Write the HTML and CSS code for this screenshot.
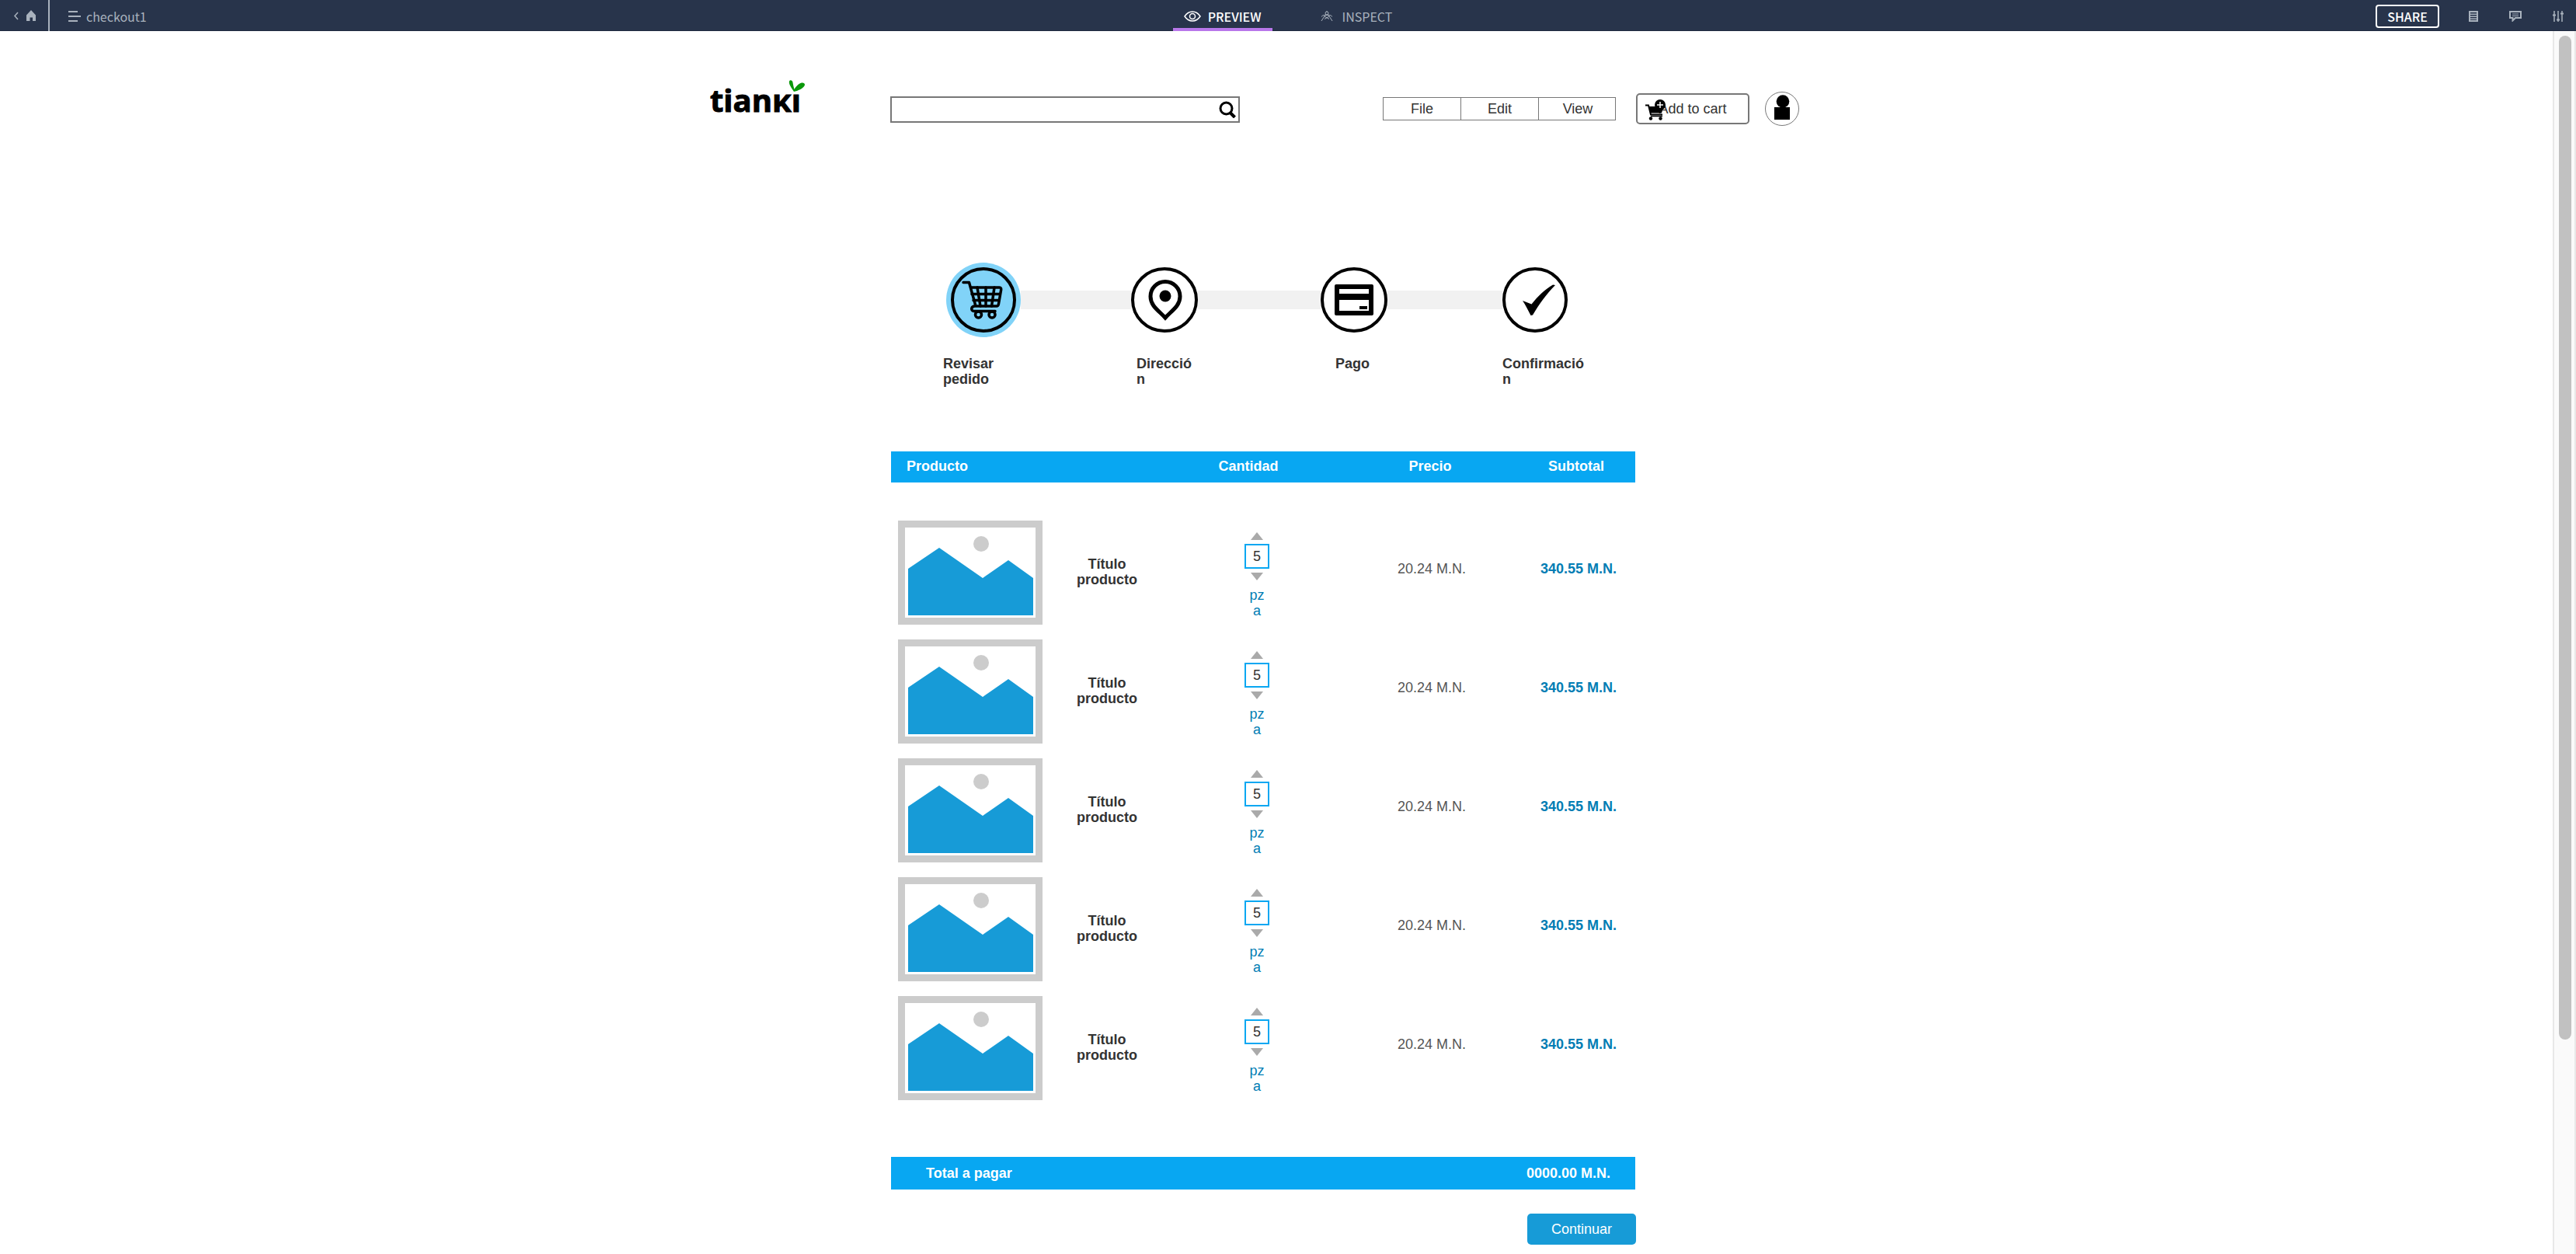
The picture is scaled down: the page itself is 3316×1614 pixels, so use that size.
FILE: index.html
```html
<!DOCTYPE html>
<html lang="es">
<head>
<meta charset="utf-8">
<meta name="viewport" content="width=device-width, initial-scale=1">
<title>checkout1</title>
<link rel="stylesheet" href="styles.css">
</head>
<body>
<svg class="defs" aria-hidden="true">
  <symbol id="picture" viewBox="0 0 186 134">
    <path fill="#ccc" fill-rule="evenodd" d="M0 0h186v134H0zM9 9v116h168V9z"/>
    <circle cx="107" cy="30" r="10" fill="#ccc"/>
    <path fill="#179bd7" d="M13 62L53 35l56 39 33-23 32 23v48H13z"/>
  </symbol>
  <symbol id="up" viewBox="0 0 16 10"><path fill="#aaa" d="M8 0l8 10H0z"/></symbol>
  <symbol id="down" viewBox="0 0 16 10"><path fill="#aaa" d="M8 10L0 0h16z"/></symbol>
</svg>

<header class="topbar">
  <div class="topbar-left">
    <a class="home" href="#" aria-label="Inicio">
      <svg width="30" height="16" viewBox="0 0 30 16"><path d="M6 4L2 8.500l4 4.500" fill="none" stroke="currentColor" stroke-width="1.500"/><path d="M23 1l6 6.500V15h-4v-4.500h-3.500V15h-4.500V7.500z" fill="currentColor"/></svg>
    </a>
    <a class="page-name" href="#">
      <svg width="16" height="14" viewBox="0 0 16 14"><path d="M0 1h12M0 7h16M0 13h12" stroke="currentColor" stroke-width="2"/></svg>
      <span>checkout1</span>
    </a>
  </div>
  <nav class="tabs">
    <a class="tab active" href="#">
      <svg width="22" height="14" viewBox="0 0 22 14" fill="none" stroke="currentColor" stroke-width="1.500"><path d="M1 7c2.500-3.800 6-6 10-6s7.500 2.200 10 6c-2.500 3.800-6 6-10 6S3.500 10.800 1 7z"/><circle cx="11" cy="7" r="3.500"/></svg>
      <span>PREVIEW</span>
    </a>
    <a class="tab" href="#">
      <svg width="16" height="14" viewBox="0 0 16 14" fill="none" stroke="currentColor"><circle cx="8" cy="3" r="2"/><path d="M8 0v1M6.500 4.500L1 13M9.500 4.500L15 13M5 7l6 3.500M11 7l-6 3.500M1 7.500C3 5 5 5.500 8 5.500s5-.5 7 2"/></svg>
      <span>INSPECT</span>
    </a>
  </nav>
  <div class="topbar-right">
    <button class="share" type="button">SHARE</button>
    <button class="tool" type="button" aria-label="Notas"><svg width="12" height="14" viewBox="0 0 12 14"><path fill="currentColor" fill-rule="evenodd" d="M0 0h12v14H0zM2 2v1.500h8V2zM2 5v1.500h8V5zM2 8v1.500h8V8zM2 11v1h8v-1z"/></svg></button>
    <button class="tool" type="button" aria-label="Comentarios"><svg width="16" height="14" viewBox="0 0 16 14"><path d="M1 1h14v8H8l-3.500 3.500V9H1z" fill="none" stroke="currentColor" stroke-width="2"/><path d="M4 4h8M4 6.500h8" stroke="currentColor"/></svg></button>
    <button class="tool" type="button" aria-label="Ajustes"><svg width="14" height="14" viewBox="0 0 14 14" stroke="currentColor"><path d="M2 0v14M7 0v14M12 0v14" stroke-width="1.500"/><path d="M0 5.500h4M5 11.500h4M10 3.500h4" stroke-width="2"/></svg></button>
  </div>
</header>

<div class="workspace">
  <main class="stage">
    <div class="canvas">
      <div class="site-header">
        <a class="logo" href="#">tianĸı
          <svg class="leaf" width="22" height="16" viewBox="0 0 22 16" aria-hidden="true"><path fill="#0a980a" d="M7 15C4 11 0 5 1 1.500 2-.5 5 0 5.500 3 6 6 6.500 9 7.500 12 9 9 13 4.500 17 3.500c3-.5 5 1.500 3.500 4C18.500 11 12 14 7 15z"/></svg>
        </a>
        <form class="search">
          <input type="search" aria-label="Buscar">
          <button type="button" aria-label="Buscar"><svg width="22" height="22" viewBox="0 0 22 22" fill="none" stroke="#000"><circle cx="9.500" cy="9.500" r="7.500" stroke-width="3"/><path d="M14.500 15l6 6" stroke-width="4"/></svg></button>
        </form>
        <div class="actions">
          <nav class="menu"><a href="#">File</a><a href="#">Edit</a><a href="#">View</a></nav>
          <button class="cart" type="button">Add to cart
            <svg class="cart-icon" width="27" height="27" viewBox="0 0 27 27" aria-hidden="true"><path d="M0 7.500h4l3 12h15" fill="none" stroke="#000" stroke-width="2"/><path d="M4 9h14l4 5-1 3.500H7z"/><path d="M7 21.500h15" stroke="#000" stroke-width="1.500"/><circle cx="7" cy="24.500" r="2.200"/><circle cx="19.500" cy="24.500" r="2.200"/><circle cx="19" cy="7" r="7"/><path d="M19 3v8M15 7h8" stroke="#fff" stroke-width="1.500"/></svg>
          </button>
          <a class="avatar" href="#" aria-label="Cuenta"><svg width="44" height="44" viewBox="0 0 44 44"><circle cx="22" cy="22" r="21.500" fill="#fff" stroke="#777"/><circle cx="23" cy="12.500" r="8.300"/><path d="M12 20h20v16H12z"/></svg></a>
        </div>
      </div>

      <div class="checkout">
        <ol class="steps">
          <li class="step review">
            <div class="track"><svg width="96" height="96" viewBox="0 0 96 96"><circle cx="48" cy="48" r="48" fill="#81d3f8"/><circle cx="48" cy="48" r="40" fill="none" stroke="#000" stroke-width="4"/><g fill="none" stroke="#000" stroke-width="3.500" stroke-linejoin="round" stroke-linecap="round"><path d="M22 25.500h7.500L38 56h27c2 0 2-1 2.500-3l3-17c.5-2.500 0-4-2-4H31.500M37 56c-5 0-6 6-1 6.500h27"/><path d="M33 40.500h36M35 48.500h33M40 32l4 24M51 32v24M62 32l-3.500 24"/><circle cx="41.500" cy="67" r="4"/><circle cx="59" cy="67" r="4"/></g></svg></div>
            <span class="label">Revisar pedido</span>
          </li>
          <li class="step address">
            <div class="track"><svg width="86" height="84" viewBox="0 0 86 84"><ellipse cx="43" cy="42" rx="41" ry="40" fill="#fff" stroke="#000" stroke-width="4"/><path d="M44 65C36 56 25 50 25 37.500a19 19 0 0 1 38 0C63 50 52 56 44 65z" fill="none" stroke="#000" stroke-width="5"/><circle cx="44" cy="37" r="7.500"/></svg></div>
            <span class="label">Dirección</span>
          </li>
          <li class="step payment">
            <div class="track"><svg width="86" height="84" viewBox="0 0 86 84"><ellipse cx="43" cy="42" rx="41" ry="40" fill="#fff" stroke="#000" stroke-width="4"/><path fill-rule="evenodd" d="M20 22h46q2 0 2 2v36q0 2-2 2H20q-2 0-2-2V24q0-2 2-2zM24 28v6h38v-6zM24 42v14h38V42z"/><path d="M50 50h10v4H50z"/></svg></div>
            <span class="label">Pago</span>
          </li>
          <li class="step confirm">
            <div class="track"><svg width="84" height="84" viewBox="0 0 84 84"><circle cx="42" cy="42" r="40" fill="#fff" stroke="#000" stroke-width="4"/><path d="M26 43l11.500 4.500C46 37 54 29 65 22.500l3 .5C57 34 47 48 39 61.500l-2.500.5C33 55 30 49 26 43z"/></svg></div>
            <span class="label">Confirmación</span>
          </li>
        </ol>

        <table class="items">
          <colgroup><col class="c-image"><col class="c-title"><col class="c-qty"><col class="c-price"><col></colgroup>
          <thead><tr><th class="h-product" colspan="2">Producto</th><th class="h-qty">Cantidad</th><th class="h-price">Precio</th><th>Subtotal</th></tr></thead>
          <tbody>
            <tr>
              <td class="image"><svg width="186" height="134"><use href="#picture"/></svg></td>
              <td class="title">Título<br>producto</td>
              <td class="qty"><div class="spinner"><button type="button" aria-label="Más"><svg width="16" height="10"><use href="#up"/></svg></button><input type="text" value="5" aria-label="Cantidad"><button type="button" aria-label="Menos"><svg width="16" height="10"><use href="#down"/></svg></button><span class="unit">pza</span></div></td>
              <td class="price">20.24 M.N.</td><td class="subtotal">340.55 M.N.</td>
            </tr>
            <tr>
              <td class="image"><svg width="186" height="134"><use href="#picture"/></svg></td>
              <td class="title">Título<br>producto</td>
              <td class="qty"><div class="spinner"><button type="button" aria-label="Más"><svg width="16" height="10"><use href="#up"/></svg></button><input type="text" value="5" aria-label="Cantidad"><button type="button" aria-label="Menos"><svg width="16" height="10"><use href="#down"/></svg></button><span class="unit">pza</span></div></td>
              <td class="price">20.24 M.N.</td><td class="subtotal">340.55 M.N.</td>
            </tr>
            <tr>
              <td class="image"><svg width="186" height="134"><use href="#picture"/></svg></td>
              <td class="title">Título<br>producto</td>
              <td class="qty"><div class="spinner"><button type="button" aria-label="Más"><svg width="16" height="10"><use href="#up"/></svg></button><input type="text" value="5" aria-label="Cantidad"><button type="button" aria-label="Menos"><svg width="16" height="10"><use href="#down"/></svg></button><span class="unit">pza</span></div></td>
              <td class="price">20.24 M.N.</td><td class="subtotal">340.55 M.N.</td>
            </tr>
            <tr>
              <td class="image"><svg width="186" height="134"><use href="#picture"/></svg></td>
              <td class="title">Título<br>producto</td>
              <td class="qty"><div class="spinner"><button type="button" aria-label="Más"><svg width="16" height="10"><use href="#up"/></svg></button><input type="text" value="5" aria-label="Cantidad"><button type="button" aria-label="Menos"><svg width="16" height="10"><use href="#down"/></svg></button><span class="unit">pza</span></div></td>
              <td class="price">20.24 M.N.</td><td class="subtotal">340.55 M.N.</td>
            </tr>
            <tr>
              <td class="image"><svg width="186" height="134"><use href="#picture"/></svg></td>
              <td class="title">Título<br>producto</td>
              <td class="qty"><div class="spinner"><button type="button" aria-label="Más"><svg width="16" height="10"><use href="#up"/></svg></button><input type="text" value="5" aria-label="Cantidad"><button type="button" aria-label="Menos"><svg width="16" height="10"><use href="#down"/></svg></button><span class="unit">pza</span></div></td>
              <td class="price">20.24 M.N.</td><td class="subtotal">340.55 M.N.</td>
            </tr>
          </tbody>
        </table>

        <div class="total"><span>Total a pagar</span><span>0000.00 M.N.</span></div>
        <button class="continue" type="button">Continuar</button>
      </div>
    </div>
  </main>
  <div class="scrollbar" aria-hidden="true"><div class="thumb"></div></div>
</div>
</body>
</html>
```
FILE: styles.css
```css
* { box-sizing: border-box; }

body {
  margin: 0;
  min-height: 100vh;
  display: flex;
  flex-direction: column;
  background: #fff;
  color: #333;
  font: 18px/20px "Liberation Sans", Arial, sans-serif;
}

a { color: inherit; text-decoration: none; }
button, input { font: inherit; color: inherit; margin: 0; padding: 0; }
button { border: 0; background: none; }
svg { display: block; }
.defs { position: absolute; width: 0; height: 0; }

/* Top bar */
.topbar {
  display: grid;
  grid-template-columns: 1fr auto 1fr;
  height: 40px;
  background: #28344b;
  border-bottom: 1px solid #202a40;
  color: #a9b2bd;
  font: 16px/24px "Noto Sans CJK SC", "Noto Sans", sans-serif;
}
.topbar-left, .topbar-right, .home, .page-name, .tabs, .tab { display: flex; align-items: center; }
.topbar-left, .topbar-right { padding-top: 2px; }
.home {
  height: 40px;
  padding-left: 17px;
  width: 64px;
  margin-top: -2px;
  border-right: 2px solid #a9b2bd;
}
.page-name { padding-left: 24px; gap: 7px; }
.tabs { gap: 48px; }
.tab {
  height: 40px;
  padding: 6px 14px 0;
  gap: 9px;
  border-bottom: 4px solid transparent;
}
.tab:last-child { gap: 12px; }
.tab.active { color: #fff; font-weight: 500; border-color: #b877ea; }
.topbar-right { justify-content: flex-end; padding-right: 16px; }
.share {
  width: 82px;
  height: 30px;
  margin-right: 38px;
  border: 2px solid #fff;
  border-radius: 4px;
  color: #fff;
  font-weight: 500;
}
.tool + .tool { margin-left: 40px; }

/* Workspace */
.workspace { flex: 1; display: flex; }
.stage { flex: 1; padding: 63px 0 12px; }
.canvas { max-width: 1458px; margin: 0 auto; }
.scrollbar {
  width: 30px;
  padding: 6px 4px 0 6px;
  background: #fafafa;
  border-left: 2px solid #e8e8e8;
  border-right: 2px solid #e8e8e8;
}
.thumb { width: 16px; height: 82.4%; background: #c1c1c1; border-radius: 8px; }

/* Site header */
.site-header {
  display: flex;
  align-items: flex-end;
  max-width: 1402px;
  height: 59px;
}
.logo {
  position: relative;
  align-self: flex-start;
  width: 232px;
  padding-top: 4px;
  color: #000;
  font: 700 40px/44px "Open Sans", sans-serif;
  -webkit-text-stroke: 1px #000;
}
.leaf { position: absolute; left: 101px; top: 0; }
.search {
  display: flex;
  align-items: center;
  width: 450px;
  height: 34px;
  margin-bottom: 4px;
  padding-right: 3px;
  border: 2px solid #777;
}
.search input { flex: 1; min-width: 0; border: 0; outline: 0; background: none; }
.actions { display: flex; align-items: center; margin-left: auto; }
.menu {
  display: grid;
  grid-template-columns: 100px 100px 100px;
  height: 30px;
  border: 1px solid #777;
  width: 300px;
  text-align: center;
  line-height: 28px;
}
.menu a { border-right: 1px solid #777; }
.menu a:last-child { border: 0; }
.cart {
  position: relative;
  width: 146px;
  height: 40px;
  margin: 0 20px 0 26px;
  border: 2px solid #777;
  border-radius: 5px;
}
.cart-icon { position: absolute; left: 10px; top: 6px; }

/* Checkout */
.checkout { width: 960px; max-width: 100%; margin-left: 233px; padding-top: 176px; }
.steps { display: flex; margin: 0 0 83px 67px; padding: 0; list-style: none; }
.step { display: flex; flex-direction: column; gap: 24px; width: 244px; }
.track { display: flex; align-items: center; height: 96px; }
.track svg { flex: none; }
.track::after { content: ""; flex: 1; height: 24px; background: #f1f1f1; }
.label { font-weight: 700; width: 84px; min-height: 40px; overflow-wrap: anywhere; }
.review { width: 242px; }
.review .track { padding-left: 4px; }
.address .label { padding-left: 7px; }
.payment { width: 234px; }
.payment .label { padding-left: 19px; }
.confirm { width: 110px; }
.confirm .track::after { content: none; }
.confirm .label { width: 110px; }

.items { width: 958px; table-layout: fixed; border-collapse: collapse; }
.c-image { width: 200px; }
.c-title { width: 156px; }
.c-qty { width: 230px; }
.c-price { width: 220px; }
.items th {
  height: 40px;
  padding: 0 0 2px;
  background: #08a7f2;
  color: #fff;
  text-align: center;
}
.items .h-product { padding-left: 20px; text-align: left; }
.items .h-qty { padding-right: 22px; }
.items .h-price { padding-right: 4px; }
.items tbody::before { content: ""; display: table-row; height: 40px; }
.items td { height: 153px; padding: 0; vertical-align: top; text-align: center; }
.items .image { padding: 9px 0 0 9px; }
.items .title { padding-top: 55px; font-weight: 700; }
.items .qty { padding-top: 24px; }
.items .price { padding-top: 61px; color: #555; }
.items .subtotal { padding: 61px 0 0 6px; color: #027db4; font-weight: 700; }
.spinner { display: flex; flex-direction: column; align-items: center; gap: 5px; }
.spinner input { width: 32px; height: 32px; border: 2px solid #08a7f2; text-align: center; }
.unit { width: 20px; margin-top: 4px; color: #027db4; word-break: break-all; }

.total {
  display: flex;
  align-items: center;
  justify-content: space-between;
  width: 958px;
  height: 42px;
  margin-top: 63px;
  padding: 0 32px 0 45px;
  background: #08a7f2;
  color: #fff;
  font-weight: 700;
}
.continue {
  display: block;
  width: 140px;
  height: 40px;
  margin: 31px 0 0 819px;
  border-radius: 5px;
  background: #179bd7;
  color: #fff;
}
```
